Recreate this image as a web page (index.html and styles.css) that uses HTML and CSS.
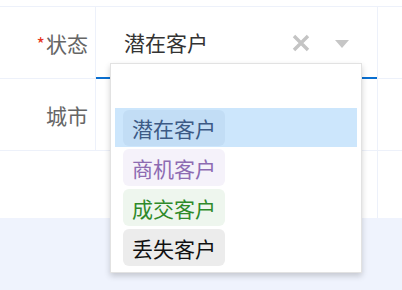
FILE: index.html
```html
<!DOCTYPE html>
<html lang="zh-CN">
<head>
    <meta charset="UTF-8">
    <meta name="viewport" content="width=device-width, initial-scale=1.0">
    <title>客户状态</title>
    <link rel="stylesheet" href="styles.css">
</head>
<body>
    <div class="page">
        <div class="form">
            <div class="row">
                <div class="cell label"><span class="required">*</span>状态</div>
                <div class="cell field">
                    <div class="select is-focused">
                        <span class="select-value">潜在客户</span>
                        <span class="select-clear">
                            <svg width="18" height="18" viewBox="0 0 18 18">
                                <path d="M2 2 L16 16 M16 2 L2 16" stroke="#c4c4c4" stroke-width="3.4" fill="none"/>
                            </svg>
                        </span>
                        <span class="select-arrow"></span>
                    </div>
                    <div class="dropdown">
                        <ul class="options">
                            <li class="option is-active"><span class="tag tag-blue">潜在客户</span></li>
                            <li class="option"><span class="tag tag-purple">商机客户</span></li>
                            <li class="option"><span class="tag tag-green">成交客户</span></li>
                            <li class="option"><span class="tag tag-gray">丢失客户</span></li>
                        </ul>
                    </div>
                </div>
                <div class="cell side"></div>
            </div>
            <div class="row">
                <div class="cell label">城市</div>
                <div class="cell field"></div>
                <div class="cell side"></div>
            </div>
            <div class="row row-empty">
                <div class="cell label no-border"></div>
                <div class="cell field"></div>
                <div class="cell side"></div>
            </div>
        </div>
        <div class="band"></div>
    </div>
</body>
</html>
```

FILE: styles.css
```css
* {
    padding: 0;
    margin: 0;
    box-sizing: border-box;
}
body {
    font-family: "Noto Sans CJK SC", "Noto Sans", sans-serif;
    background-color: #fff;
    width: 402px;
    height: 290px;
    overflow: hidden;
}
.page {
    display: flex;
    flex-direction: column;
    height: 100%;
    padding-top: 6px;
}
.form {
    border-top: 1px solid #edf1fa;
}
.row {
    display: flex;
    height: 72px;
    border-bottom: 1px solid #edf1fa;
}
.row-empty {
    height: 67px;
    border-bottom: none;
}
.cell {
    height: 100%;
}
.label {
    width: 96px;
    border-right: 1px solid #edf1fa;
    display: flex;
    align-items: center;
    justify-content: flex-end;
    padding-right: 7px;
    font-size: 21px;
    color: #666;
}
.label.no-border {
    border-right-color: transparent;
}
.required {
    color: #e8341c;
    font-size: 18px;
    margin-right: 1px;
}
.field {
    width: 282px;
    border-right: 1px solid #edf1fa;
    position: relative;
}
.side {
    flex: 1;
}
.select {
    height: 72px;
    display: flex;
    align-items: center;
    padding-left: 28px;
    font-size: 21px;
    color: #333;
    border-bottom: 2px solid transparent;
}
.select.is-focused {
    border-bottom-color: #0a6fd0;
}
.select-value {
    flex: 1;
}
.select-clear {
    display: flex;
    margin-right: 25px;
    margin-top: 1px;
}
.select-arrow {
    width: 0;
    height: 0;
    border-left: 7px solid transparent;
    border-right: 7px solid transparent;
    border-top: 8px solid #c6c6c6;
    margin-right: 28px;
    margin-top: 3px;
}
.dropdown {
    position: absolute;
    left: 14px;
    top: 56px;
    width: 252px;
    height: 210px;
    background-color: #fff;
    border: 1px solid #e2e2e2;
    box-shadow: 0 3px 6px rgba(0,0,0,0.18);
    padding: 44px 4px 0;
    z-index: 2;
}
.options {
    list-style: none;
}
.option {
    height: 40px;
    padding: 2px 8px 0;
}
.option.is-active {
    background-color: #cce6fc;
    height: 39px;
    padding-top: 2px;
}
.tag {
    display: inline-flex;
    align-items: center;
    height: 37px;
    padding: 0 9px;
    border-radius: 6px;
    font-size: 21px;
}
.tag-blue {
    background-color: #c2ddf5;
    color: #3c5a85;
    height: 36px;
}
.tag-purple {
    background-color: #f5f2fa;
    color: #8d6bb2;
}
.tag-green {
    background-color: #eef6ee;
    color: #2f8a2a;
}
.tag-gray {
    background-color: #ececec;
    color: #111;
}
.band {
    flex: 1;
    background-color: #eff3fd;
}
```
